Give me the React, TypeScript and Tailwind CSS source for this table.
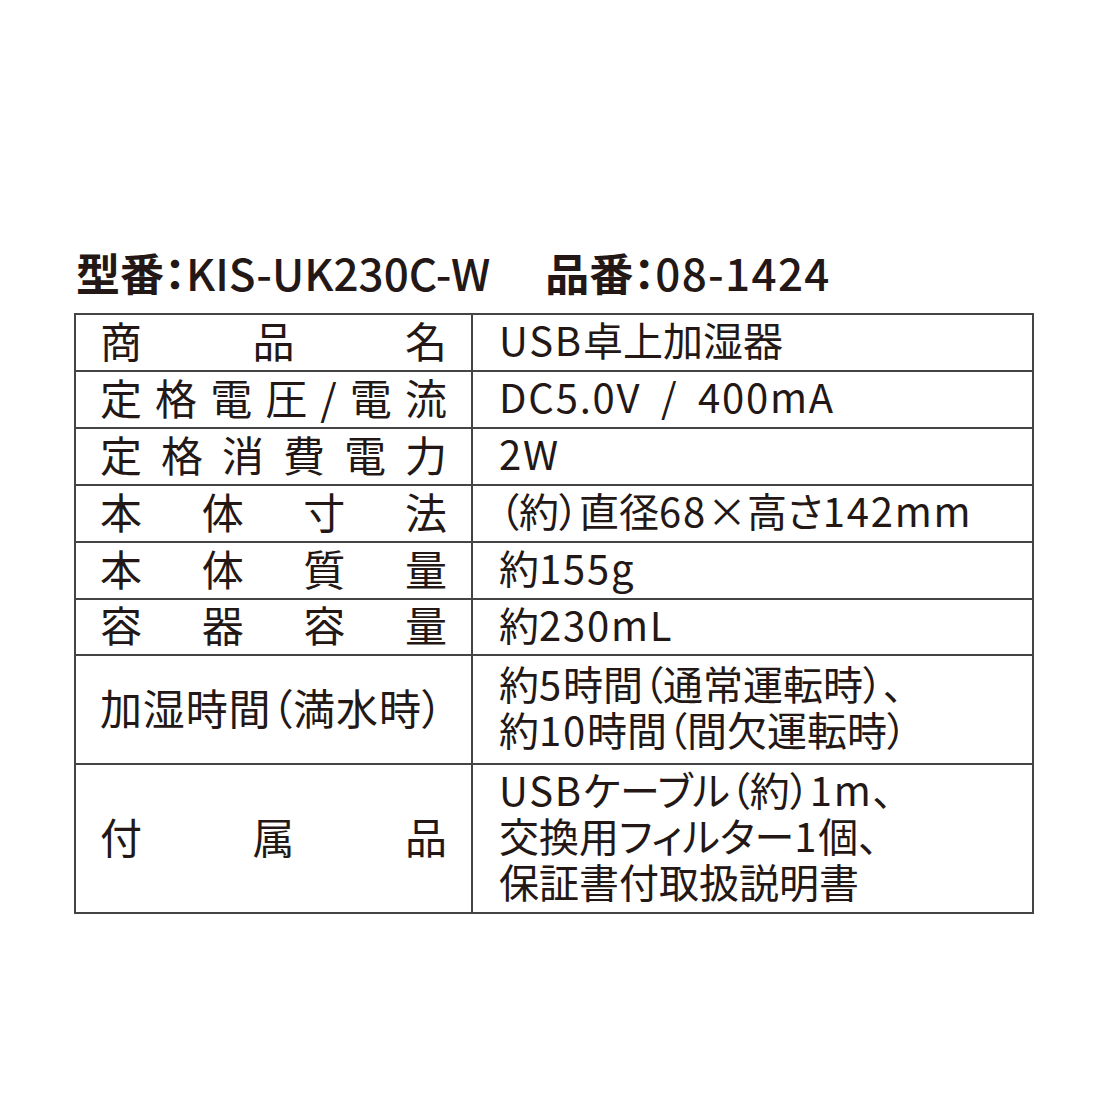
const jp = { fontFamily: '"Noto Sans CJK JP", "Noto Sans", sans-serif', fontFeatureSettings: '"palt"' };

type Row = { label: string[]; justify: boolean; value: string[]; h: string };

const rows: Row[] = [
  { label: ["商", "品", "名"], justify: true, value: ["USB卓上加湿器"], h: "h-[57px]" },
  { label: ["定", "格", "電", "圧", "/", "電", "流"], justify: true, value: ["DC5.0V / 400mA"], h: "h-[57px]" },
  { label: ["定", "格", "消", "費", "電", "力"], justify: true, value: ["2W"], h: "h-[57px]" },
  { label: ["本", "体", "寸", "法"], justify: true, value: ["（約）直径68×高さ142mm"], h: "h-[57px]" },
  { label: ["本", "体", "質", "量"], justify: true, value: ["約155g"], h: "h-[57px]" },
  { label: ["容", "器", "容", "量"], justify: true, value: ["約230mL"], h: "h-[56px]" },
  {
    label: ["加湿時間（満水時）"],
    justify: false,
    value: ["約5時間（通常運転時）、", "約10時間（間欠運転時）"],
    h: "h-[109px]",
  },
  {
    label: ["付", "属", "品"],
    justify: true,
    value: ["USBケーブル（約）1m、", "交換用フィルター1個、", "保証書付取扱説明書"],
    h: "h-[147px]",
  },
];

// latin runs get a little extra tracking, the original face is wider than Noto
function Value({ text }: { text: string }) {
  const parts = text.split(/([A-Za-z0-9.\/ ]+)/).filter((p) => p !== "");
  return (
    <>
      {parts.map((p, i) =>
        /^[A-Za-z0-9.\/ ]+$/.test(p) ? (
          <span key={i} className="inline-block tracking-[0.045em] [word-spacing:0.22em]">
            {p}
          </span>
        ) : (
          <span key={i} className="inline-block">
            {p}
          </span>
        )
      )}
    </>
  );
}

export default function App() {
  return (
    <div className="w-[1100px] h-[1100px] bg-white text-[#231815]" style={jp}>
      <div className="pt-[250px] pl-[74px]">
        <div className="pl-[2px] text-[44px] leading-[44px] whitespace-pre flex items-center">
          <span className="font-bold">型番：</span>
          <span className="font-medium">KIS-UK230C-W</span>
          <span className="inline-block w-[55px]" />
          <span className="font-bold">品番：</span>
          <span className="font-medium tracking-[0.03em]">08-1424</span>
        </div>
        <div className="mt-[19px] w-[960px] border-2 border-[#444]">
          {rows.map((r, i) => (
            <div
              key={i}
              className={`flex ${r.h} ${i < rows.length - 1 ? "border-b-2 border-[#444]" : ""}`}
            >
              <div
                className={`w-[397px] shrink-0 border-r-2 border-[#444] flex items-center px-[24px] pb-[6px] text-[42px] leading-none whitespace-nowrap ${
                  r.justify ? "justify-between" : "justify-start tracking-[0.02em]"
                }`}
              >
                {r.label.map((c, j) => (
                  <span key={j}>{c}</span>
                ))}
              </div>
              <div className="flex-1 flex flex-col justify-center pl-[26px] pb-[7px] text-[40px] leading-[46px]">
                {r.value.map((v, j) => (
                  <div key={j} className="whitespace-pre h-[46px]">
                    <Value text={v} />
                  </div>
                ))}
              </div>
            </div>
          ))}
        </div>
      </div>
    </div>
  );
}
